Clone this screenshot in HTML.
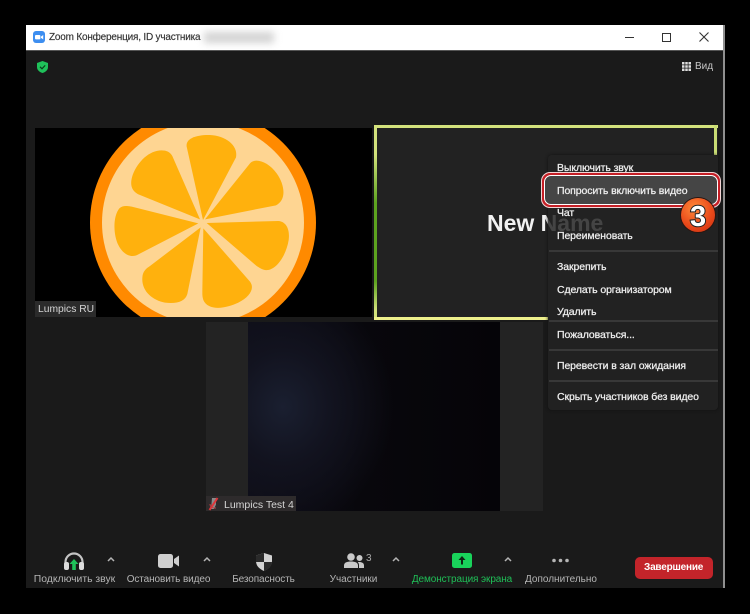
<!DOCTYPE html>
<html><head><meta charset="utf-8">
<style>
html,body{margin:0;padding:0;background:#000;}
#p{position:relative;width:750px;height:614px;overflow:hidden;background:#000;font-family:"Liberation Sans",sans-serif;}
.a{position:absolute;}
.t{position:absolute;white-space:nowrap;line-height:14px;}
.m{position:absolute;left:557px;white-space:nowrap;font-size:10.5px;line-height:14px;color:#efefef;-webkit-text-stroke:.25px #efefef;letter-spacing:-.1px;}
.s{position:absolute;left:549px;width:169px;height:2px;background:#383838;}
.l{position:absolute;white-space:nowrap;font-size:10px;line-height:14px;color:#b5b5b5;transform:translateX(-50%);top:573px;}
</style></head><body>
<div id="p">
<!-- window -->
<div class="a" style="left:26px;top:25px;width:698px;height:563px;background:#1a1a1a;"></div>
<div class="a" style="left:723px;top:25px;width:2px;height:563px;background:#8f8f8f;"></div>
<div class="a" style="left:26px;top:25px;width:697px;height:25px;background:#fff;border-bottom:1px solid #555;"></div>
<svg class="a" style="left:33px;top:31px;" width="12" height="12" viewBox="0 0 12 12"><rect width="12" height="12" rx="3" fill="#3d8ef0"/><rect x="2" y="4" width="5.4" height="4.4" rx="1" fill="#fff"/><path d="M8 5.6L10.2 4v4.4L8 6.9z" fill="#fff"/></svg>
<div class="t" style="left:49px;top:31px;font-size:10px;color:#333;letter-spacing:-.2px;-webkit-text-stroke:.15px #333;">Zoom Конференция, ID участника</div>
<div class="a" style="left:204px;top:32px;width:70px;height:11px;background:#bbb;filter:blur(4px);opacity:.65;"></div>
<div class="a" style="left:625px;top:37px;width:9px;height:1px;background:#333;"></div>
<div class="a" style="left:662px;top:33px;width:7px;height:7px;border:1.3px solid #333;"></div>
<svg class="a" style="left:699px;top:32px;" width="10" height="10" viewBox="0 0 10 10"><path d="M.5.5l9 9M9.5.5l-9 9" stroke="#333" stroke-width="1.1"/></svg>
<svg class="a" style="left:37px;top:61px;" width="11" height="12" viewBox="0 0 11 12"><path d="M5.5 0L11 2v4c0 3-2.4 5-5.5 6C2.400 11 0 9 0 6V2z" fill="#1fc15a"/><path d="M3 5.800l2 2 3.200-3.400" fill="none" stroke="#0d3a1c" stroke-width="1.200"/></svg>
<svg class="a" style="left:682px;top:62px;" width="9" height="9" viewBox="0 0 9 9" fill="#ddd"><rect width="2.500" height="2.500"/><rect x="3.250" width="2.500" height="2.500"/><rect x="6.500" width="2.500" height="2.500"/><rect y="3.250" width="2.500" height="2.500"/><rect x="3.250" y="3.250" width="2.500" height="2.500"/><rect x="6.500" y="3.250" width="2.500" height="2.500"/><rect y="6.500" width="2.500" height="2.500"/><rect x="3.250" y="6.500" width="2.500" height="2.500"/><rect x="6.500" y="6.500" width="2.500" height="2.500"/></svg>
<div class="t" style="left:695px;top:60px;font-size:10px;color:#c8c8c8;">Вид</div>

<!-- tile 1 -->
<svg class="a" style="left:35px;top:128px;" width="337" height="189" viewBox="15 24 1011 567">
<rect x="15" y="24" width="1011" height="567" fill="#000"/>
<circle cx="519" cy="308" r="339" fill="#ff8a00"/>
<circle cx="519" cy="308" r="303" fill="#fed592"/>
<g fill="#ffb10d">
<path d="M519 300L470 80C466 55 500 44 540 45C585 47 625 75 618 112Z"/>
<path d="M525 298L660 130C675 112 715 125 740 160C765 195 770 240 738 256Z"/>
<path d="M530 309L745 303C770 305 780 330 776 360C768 410 735 455 705 450C695 448 690 444 680 438Z"/>
<path d="M520 325L660 485C675 505 660 530 625 548C590 565 535 575 520 540C517 530 517 525 517 515Z"/>
<path d="M512 322L472 522C465 545 440 552 405 548C365 540 330 510 338 465C342 450 350 445 360 438Z"/>
<path d="M505 310L325 403C305 415 280 405 265 375C250 345 248 290 268 265C278 256 290 257 305 260Z"/>
<path d="M510 298L330 225C305 215 298 195 308 165C325 120 365 85 405 92C418 95 425 102 430 115Z"/>
</g>
</svg>
<div class="a" style="left:35px;top:301px;width:61px;height:16px;background:#2b2b2b;"></div>
<div class="t" style="left:38px;top:303px;font-size:10.3px;color:#d5d5d5;">Lumpics RU</div>

<!-- tile 2 -->
<div class="a" style="left:374px;top:125px;width:344px;height:195px;background:#222;"></div>
<div class="a" style="left:374px;top:125px;width:344px;height:3px;background:#d3e27c;"></div>
<div class="a" style="left:374px;top:125px;width:3px;height:195px;background:linear-gradient(#d3e27c 0,#d3e27c 15%,#5da31f 40%,#5da31f 80%,#d3e27c 95%);"></div>
<div class="a" style="left:374px;top:317px;width:174px;height:3px;background:#eef08c;"></div>
<div class="a" style="left:714px;top:125px;width:3px;height:30px;background:#c9dc74;"></div>
<div class="t" style="left:487px;top:210px;font-size:23px;line-height:26px;font-weight:bold;color:#f2f2f2;">New Name</div>

<!-- tile 3 -->
<div class="a" style="left:206px;top:322px;width:337px;height:189px;background:#232323;"></div>
<div class="a" style="left:248px;top:322px;width:252px;height:189px;background:radial-gradient(ellipse 110px 125px at 35px 85px,#1a1f30 0,#12131f 45%,rgba(13,12,22,0) 100%),linear-gradient(90deg,#0d0c16,#08070c 45%,#050408);"></div>
<div class="a" style="left:206px;top:496px;width:90px;height:15px;background:#2e2b2c;"></div>
<svg class="a" style="left:208px;top:497px;" width="11" height="14" viewBox="0 0 11 14"><path d="M4 1h4v6.500L6 12H3z" fill="#c9c9c9" opacity=".6"/><path d="M9.500 1L1.500 13" stroke="#e0353a" stroke-width="2"/><path d="M2 7c0 3 2 4 6 4" stroke="#c04045" fill="none"/></svg>
<div class="t" style="left:224px;top:498px;font-size:10.5px;color:#d5d5d5;">Lumpics Test 4</div>

<!-- menu -->
<div class="a" style="left:548px;top:155px;width:170px;height:255px;background:rgba(35,35,35,.84);border-radius:4px;box-shadow:0 0 3px #111;"></div>
<div class="m" style="top:161px;">Выключить звук</div>
<div class="a" style="left:541px;top:172px;width:180px;height:36px;box-sizing:border-box;border:1px solid #f3d6d6;border-radius:9px;background:#c51f26;"></div>
<div class="a" style="left:544px;top:175px;width:174px;height:30px;box-sizing:border-box;border:1px solid #fff;border-radius:7px;background:#454545;"></div>
<div class="m" style="top:184px;">Попросить включить видео</div>
<div class="m" style="top:206px;">Чат</div>
<div class="m" style="top:229px;">Переименовать</div>
<div class="s" style="top:250px;"></div>
<div class="m" style="top:260px;">Закрепить</div>
<div class="m" style="top:283px;">Сделать организатором</div>
<div class="m" style="top:305px;">Удалить</div>
<div class="s" style="top:320px;"></div>
<div class="m" style="top:328px;">Пожаловаться...</div>
<div class="s" style="top:349px;"></div>
<div class="m" style="top:359px;">Перевести в зал ожидания</div>
<div class="s" style="top:380px;"></div>
<div class="m" style="top:390px;">Скрыть участников без видео</div>

<!-- badge -->
<div class="a" style="left:681px;top:198px;width:34px;height:34px;border-radius:50%;background:radial-gradient(circle at 40% 30%,#ff8a3a 0,#ea4a1a 55%,#c92b10 100%);box-shadow:0 0 0 1px #2a1510;"></div>
<div class="t" style="left:690px;top:202px;font-size:29px;line-height:30px;font-weight:bold;color:#fff;-webkit-text-stroke:2px #222;paint-order:stroke fill;">3</div>

<!-- toolbar -->
<svg class="a" style="left:63px;top:552px;" width="22" height="20" viewBox="0 0 22 20"><path d="M2.500 13V10a8.500 8.500 0 0 1 17 0v3" fill="none" stroke="#c4c4c4" stroke-width="2.200"/><rect x="1" y="10" width="5" height="8" rx="2" fill="#dcdcdc"/><rect x="16" y="10" width="5" height="8" rx="2" fill="#dcdcdc"/><path d="M11 7l4.500 5h-2.700v6H9.200v-6H6.500z" fill="#1fc15a"/></svg>
<svg class="a" style="left:158px;top:554px;" width="21" height="14" viewBox="0 0 21 14"><rect width="15" height="14" rx="2.500" fill="#cfcfcf"/><path d="M16 5l5-3.500v11L16 9z" fill="#cfcfcf"/></svg>
<svg class="a" style="left:256px;top:553px;" width="16" height="18" viewBox="0 0 16 18"><path d="M8 0l8 2.500V8c0 5-3.500 8-8 10C3.500 16 0 13 0 8V2.500z" fill="#d2d2d2"/><path d="M8 0v9H0V2.500zM8 9h8c0 4-3.500 7.500-8 9z" fill="#2a2a2a"/></svg>
<svg class="a" style="left:344px;top:553px;" width="20" height="15" viewBox="0 0 20 15" fill="#c9c9c9"><circle cx="7" cy="4" r="3.800"/><path d="M0 15v-2.500C0 9.500 3 8.500 7 8.500s7 1 7 4V15z"/><circle cx="15.500" cy="5" r="3"/><path d="M15 15h5v-2.500c0-2.500-2-3.500-5-3.500-.5 0-1 0-1.300.100 1 1 1.300 2 1.300 3.400z"/></svg>
<div class="t" style="left:366px;top:552px;font-size:10px;color:#aaa;">3</div>
<svg class="a" style="left:452px;top:553px;" width="20" height="15" viewBox="0 0 20 15"><rect width="20" height="15" rx="2.500" fill="#19d35b"/><path d="M10 3l3.500 4H11v4.500H9V7H6.500z" fill="#0e2415"/></svg>
<svg class="a" style="left:552px;top:558px;" width="17" height="5" viewBox="0 0 17 5" fill="#b5b5b5"><circle cx="2" cy="2.500" r="1.800"/><circle cx="8.500" cy="2.500" r="1.800"/><circle cx="15" cy="2.500" r="1.800"/></svg>
<svg class="a" style="left:0;top:556px;" width="750" height="8" viewBox="0 0 750 8"><g fill="none" stroke="#b5b5b5" stroke-width="1.500"><path d="M108 5l3-3 3 3"/><path d="M204 5l3-3 3 3"/><path d="M393 5l3-3 3 3"/><path d="M505 5l3-3 3 3"/></g></svg>
<div class="l" style="left:74.500px;font-size:10.400px;">Подключить звук</div>
<div class="l" style="left:168.500px;letter-spacing:-.1px;">Остановить видео</div>
<div class="l" style="left:263.500px;letter-spacing:-.1px;">Безопасность</div>
<div class="l" style="left:353.500px;">Участники</div>
<div class="l" style="left:462px;color:#1fbf57;letter-spacing:-.1px;">Демонстрация экрана</div>
<div class="l" style="left:561px;">Дополнительно</div>
<div class="a" style="left:635px;top:557px;width:78px;height:22px;border-radius:5px;background:#c3242a;"></div>
<div class="t" style="left:644px;top:561px;font-size:10px;font-weight:bold;color:#fff;letter-spacing:-.2px;">Завершение</div>
</div>
</body></html>
